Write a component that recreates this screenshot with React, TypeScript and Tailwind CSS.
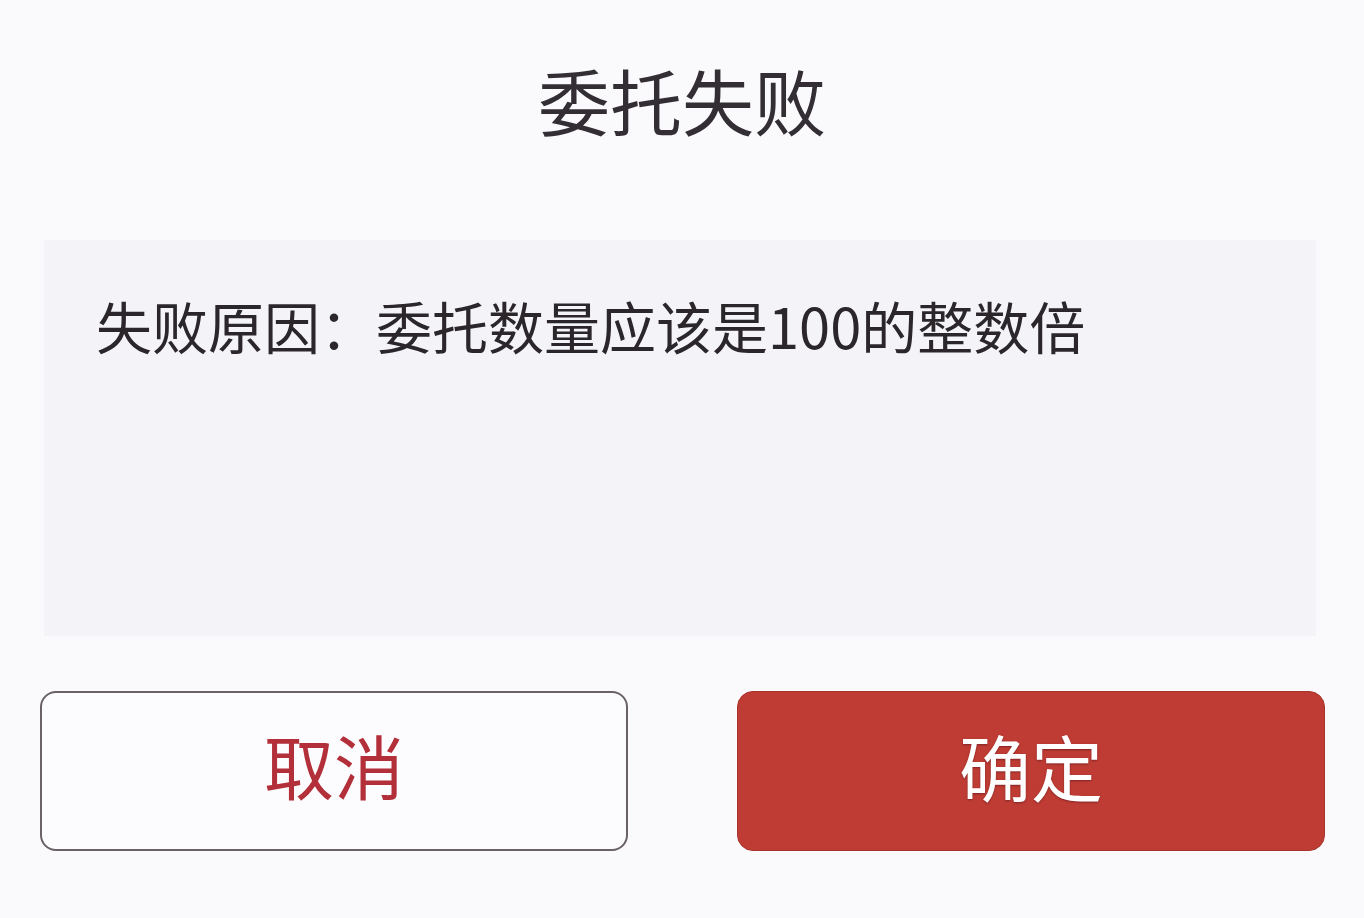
export default function App() {
    return (
        <div
            className="w-[1364px] h-[918px] bg-[#fafafc] flex flex-col overflow-hidden"
            style={{ fontFamily: '"Noto Sans CJK SC", "Noto Sans", sans-serif' }}
        >
            {/* title */}
            <div className="h-[206px] pb-[8px] flex items-center justify-center">
                <h1 className="text-[72px] leading-none text-[#332e33]">委托失败</h1>
            </div>

            {/* message box */}
            <div className="mt-[34px] ml-[44px] w-[1272px] h-[396px] bg-[#f4f4f8] pl-[52px]">
                <p className="pt-[51px] text-[56px] leading-[68px] text-[#2a262a]">
                    失败原因：委托数量应该是100的整数倍
                </p>
            </div>

            {/* actions */}
            <div className="mt-[55px] ml-[40px] flex gap-[109px]">
                <button className="w-[588px] h-[160px] pb-[12px] rounded-[16px] border-2 border-[#6a6266] bg-[#fcfcfe] flex items-center justify-center">
                    <span className="text-[70px] leading-none text-[#b3303a]">取消</span>
                </button>
                <button className="w-[588px] h-[160px] pb-[12px] rounded-[16px] bg-[#be3c33] border border-[#a8332c] flex items-center justify-center">
                    <span className="text-[72px] leading-none text-white [text-shadow:0_1px_2px_rgba(90,20,30,0.6)]">确定</span>
                </button>
            </div>
        </div>
    );
}
